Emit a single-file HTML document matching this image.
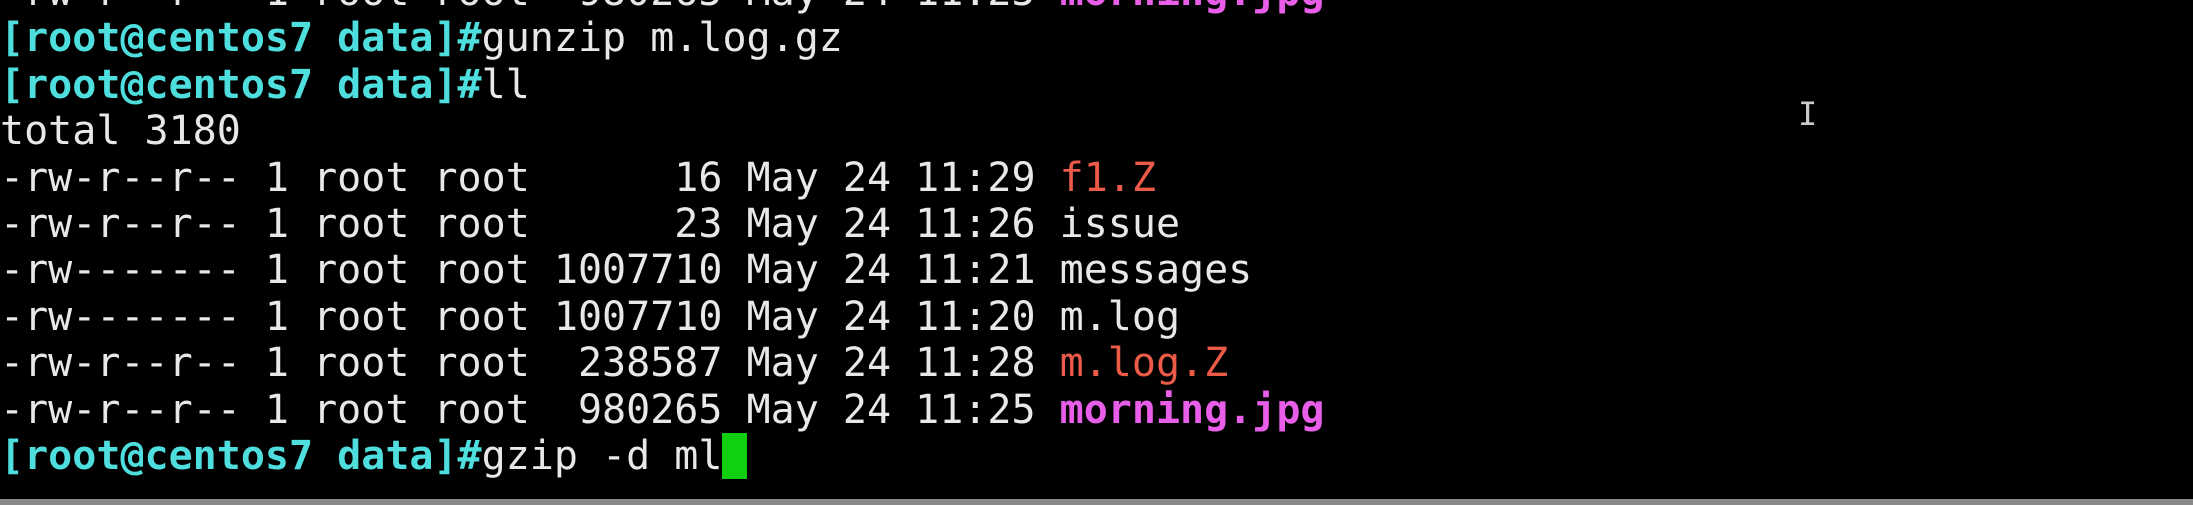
<!DOCTYPE html>
<html><head><style>
html,body{margin:0;padding:0;background:#000;width:2193px;height:505px;overflow:hidden}
pre{position:absolute;left:0;top:-31px;margin:0;font-family:"DejaVu Sans Mono","Liberation Mono",monospace;font-size:40px;line-height:46.4px;color:#e8e8e8;letter-spacing:0px}
.p{color:#4fdede;font-weight:bold}
.r{color:#ec5a48}
.m{color:#e85ee8;font-weight:bold}
.c{background:#10d010;color:#10d010}
.bar{position:absolute;left:0;top:499px;width:2193px;height:6px;background:#8a8a8a}
.ib{position:absolute;left:1798px;top:98px;width:12px;height:32px;color:#ccc;font:32px "DejaVu Sans Mono",monospace;line-height:32px}
</style></head><body>
<pre>-rw-r--r-- 1 root root  980265 May 24 11:25 <span class="m">morning.jpg</span>
<span class="p">[root@centos7 data]#</span>gunzip m.log.gz
<span class="p">[root@centos7 data]#</span>ll
total 3180
-rw-r--r-- 1 root root      16 May 24 11:29 <span class="r">f1.Z</span>
-rw-r--r-- 1 root root      23 May 24 11:26 issue
-rw------- 1 root root 1007710 May 24 11:21 messages
-rw------- 1 root root 1007710 May 24 11:20 m.log
-rw-r--r-- 1 root root  238587 May 24 11:28 <span class="r">m.log.Z</span>
-rw-r--r-- 1 root root  980265 May 24 11:25 <span class="m">morning.jpg</span>
<span class="p">[root@centos7 data]#</span>gzip -d ml<span class="c">_</span></pre>
<div class="ib">I</div>
<div class="bar"></div>
</body></html>
